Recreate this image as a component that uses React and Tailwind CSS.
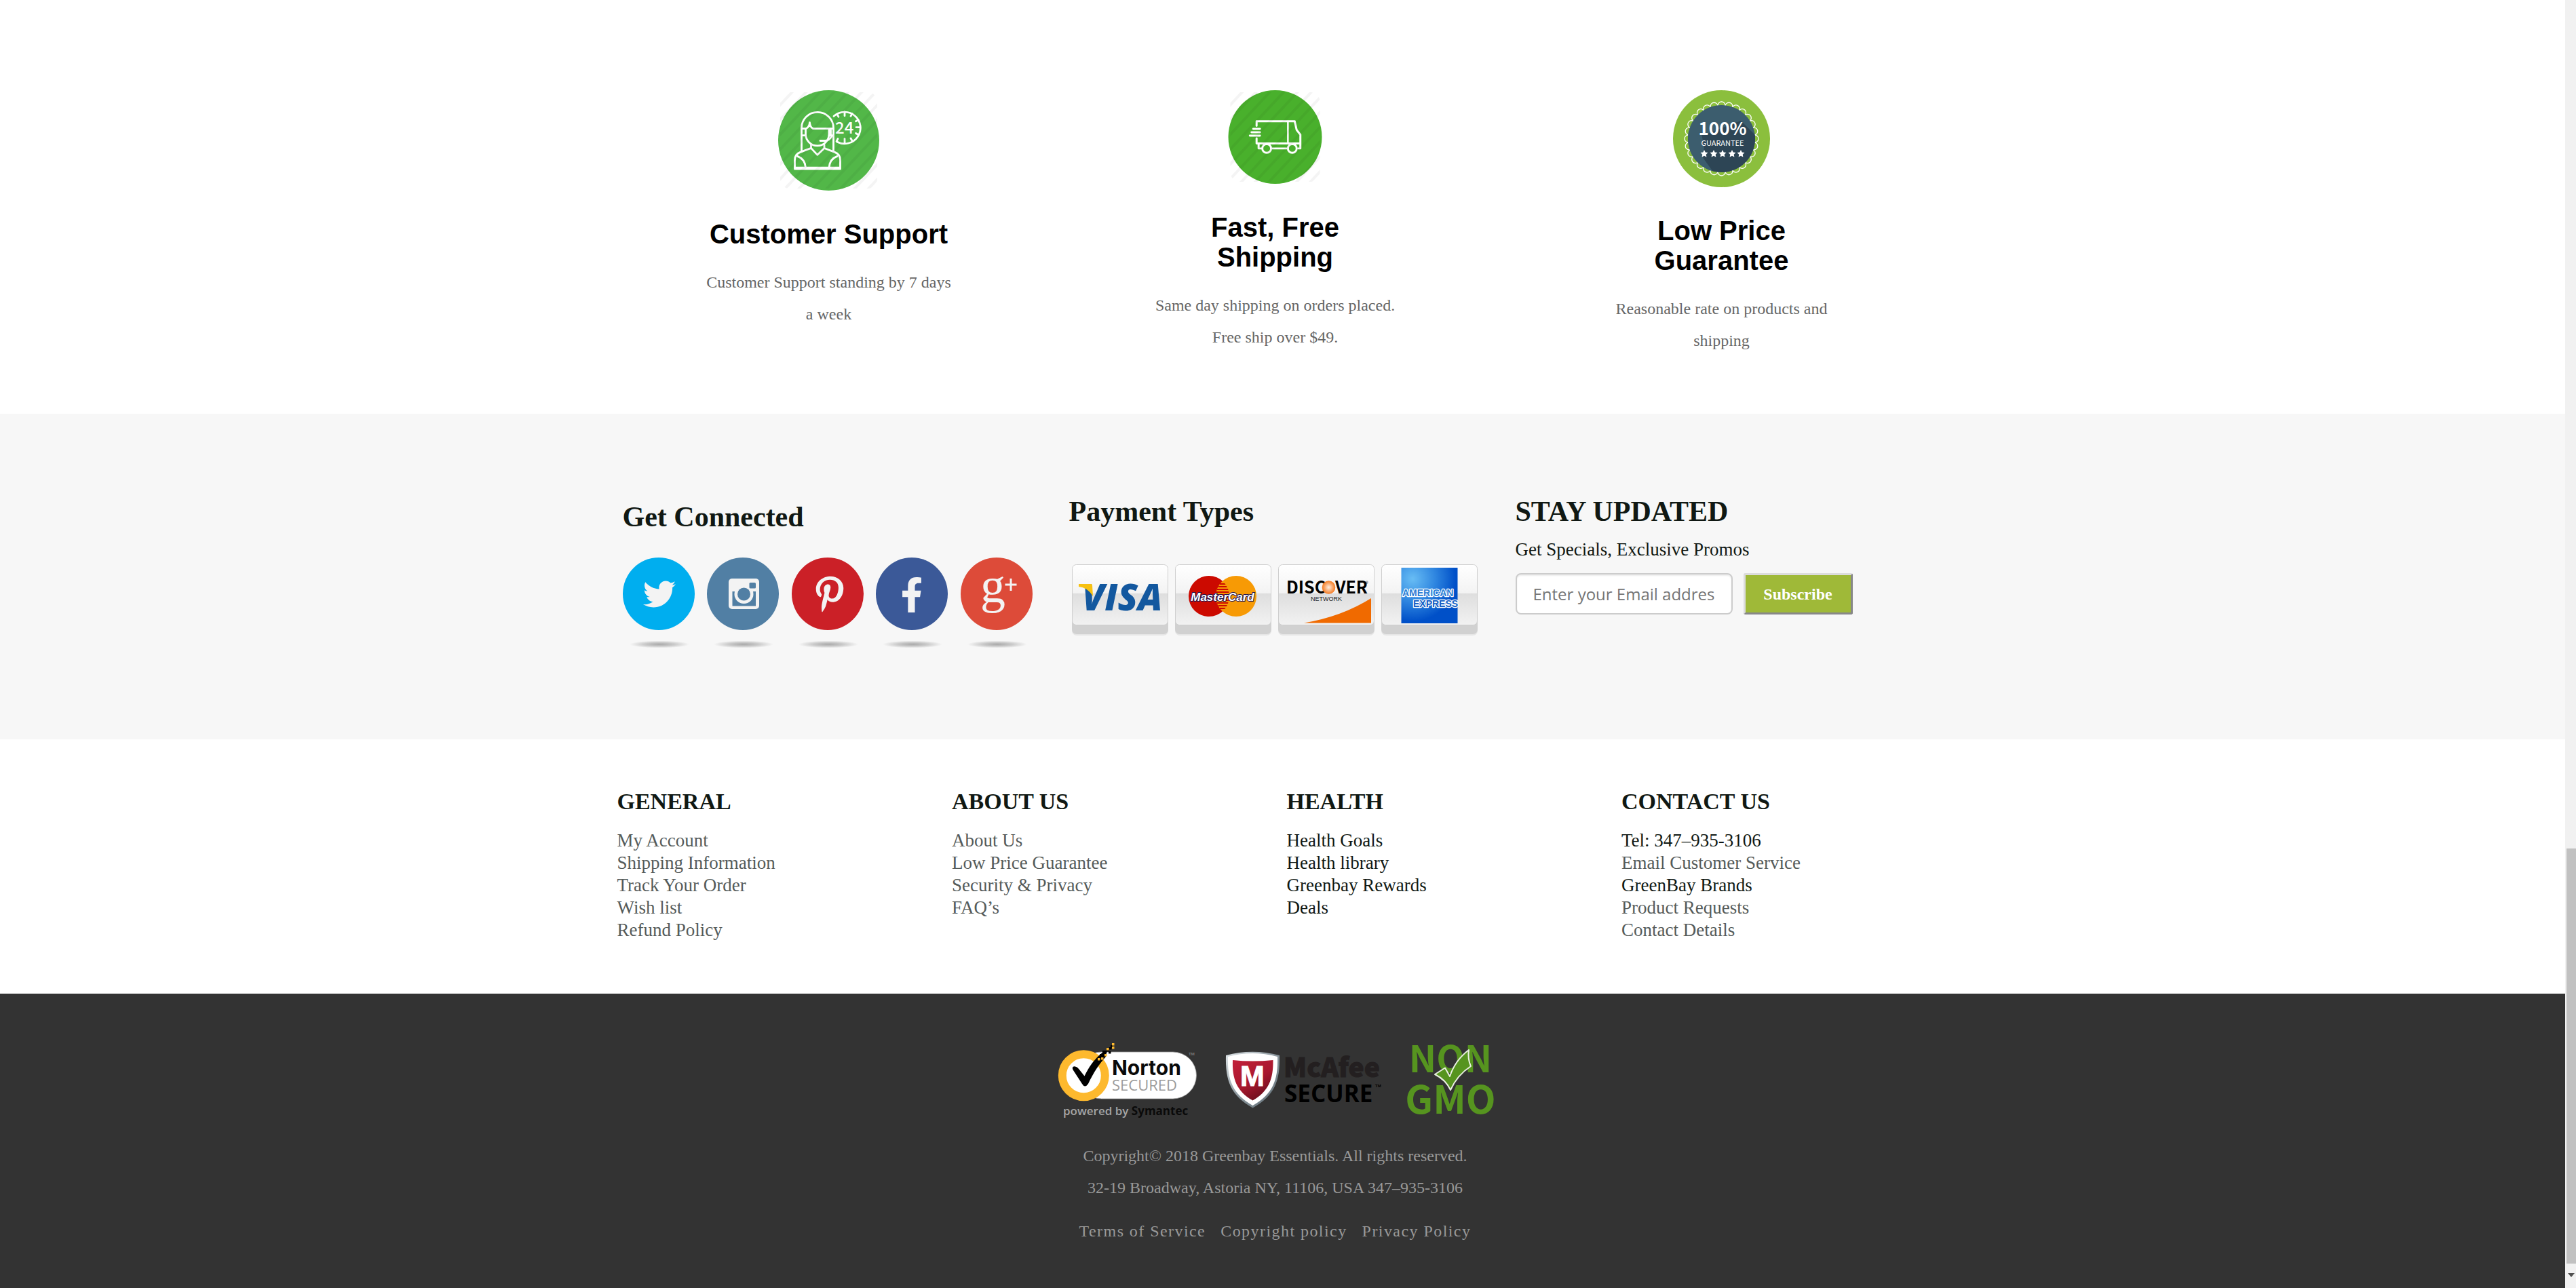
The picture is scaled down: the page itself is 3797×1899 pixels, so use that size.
import React from "react";
import { FaTwitter, FaPinterestP, FaFacebookF } from "react-icons/fa";

const SANS = '"Liberation Sans", Arial, sans-serif';
const SLIM = '"Noto Sans CJK SC", "Liberation Sans", sans-serif';
const OPEN = '"Open Sans", "Noto Sans", sans-serif';
const SERIF = '"Liberation Serif", "Times New Roman", serif';

function Stripes({ id, size }) {
  return (
    <>
      <defs>
        <pattern id={id} width="15" height="15" patternUnits="userSpaceOnUse" patternTransform="rotate(43)">
          <rect width="4" height="15" fill="#000" />
        </pattern>
      </defs>
      <rect x="3" y="3" width={size - 6} height={size - 6} rx="14" fill={`url(#${id})`} opacity="0.045" />
    </>
  );
}

function SupportIcon() {
  return (
    <svg width="149" height="148" viewBox="0 0 149 149" preserveAspectRatio="none" aria-hidden="true">
      <circle cx="74.500" cy="74.500" r="74.500" fill="#52b748" />
      <g fill="none" stroke="#fff" strokeWidth="2.800" strokeLinejoin="round" strokeLinecap="round">
        <path d="M34.500 91V56a23.500 23.500 0 0 1 47 0V91" />
        <path d="M34.500 57h6.500q5-2 5.500-9q.5 7 5 9H81" />
        <path d="M40.500 58v7c0 10 8 17.500 17.300 17.500S75 75 75 65v-7" />
        <path d="M36 67h4.500M75 67h4.500M77.500 59v7" />
        <path d="M79 68q-3 7-10 7h-7" />
        <path d="M48.500 81v5L57.800 96 68 86v-5" />
        <path d="M48.500 86l-16 6q-8 3-8 12v13h67v-13q0-9-8-12l-15.500-6" />
        <path d="M25 115h66M28.500 98q11 4 12 17M87 98q-11 4-12 17" />
        <path d="M82 38.500a23.500 23.500 0 1 1 4.500 38" />
        <path d="M98 32v6M98 72v6M121 55h-6M109 35l-2 3.500M118 44l-3.500 2M118 66l-3.500-2M109 75l-2-3.500M87 36l2 3.500M86 76l2-4" />
      </g>
      <text x="84" y="64" fontFamily={SLIM} fontSize="24" fontWeight="500" fill="#fff">24</text>
      <Stripes id="stripes-support" size={149} />
    </svg>
  );
}

function TruckIcon() {
  return (
    <svg width="139" height="138" viewBox="0 0 139 139" aria-hidden="true">
      <circle cx="69.500" cy="69.500" r="69.500" fill="#49b02c" />
      <g fill="none" stroke="#fff" strokeWidth="3" strokeLinejoin="round" strokeLinecap="round">
        <path d="M42 53v-7h56.500l3 13 5.500 7v20.500h-3M42 71.500V79h65M45 80v6.500h4M65 86.500h22" />
        <path d="M88.500 47v31" strokeWidth="2.500" />
        <circle cx="57" cy="86.500" r="6.500" />
        <circle cx="95" cy="86.500" r="6.500" />
        <path d="M37 57.500h10M34.500 62.500H47M32 67.500h15" />
      </g>
      <Stripes id="stripes-truck" size={139} />
    </svg>
  );
}

const STAR = "M0-5.500 1.700-2 5.500-1.500 2.700 1.200 3.400 5 0 3.200-3.400 5-2.700 1.200-5.500-1.500-1.700-2Z";

function GuaranteeIcon() {
  const scallops = Array.from({ length: 28 }, (_, i) => {
    const a = (i / 28) * Math.PI * 2 - Math.PI / 2;
    return [71.5 + 49 * Math.cos(a), 71.5 + 49 * Math.sin(a)];
  });
  return (
    <svg width="143" height="143" viewBox="0 0 143 143" aria-hidden="true">
      <defs>
        <clipPath id="seal"><circle cx="71.500" cy="71.500" r="49.500" /></clipPath>
      </defs>
      <circle cx="71.500" cy="71.500" r="71.500" fill="#8bbf3d" />
      {scallops.map(([x, y], i) => (
        <circle key={i} cx={x} cy={y} r="5.500" fill="#8bbf3d" stroke="#fff" strokeWidth="1.300" />
      ))}
      <circle cx="71.500" cy="71.500" r="49.500" fill="#3c5d6e" />
      <path clipPath="url(#seal)" d="M100 45 130 75V130H66L41 95V66L46 66Z" fill="#2d4555" />
      <path clipPath="url(#seal)" d="M20 60 41 60 46 84 44 100 62 127 20 127Z" fill="#3c5d6e" />
      <g fill="#fff" textAnchor="middle">
        <text x="73" y="66" fontFamily={SLIM} fontSize="26" fontWeight="700">100%</text>
        <text x="73" y="82" fontFamily={SLIM} fontSize="11">GUARANTEE</text>
        {[46, 60, 73, 87, 100].map((x) => (
          <path key={x} d={STAR} transform={`translate(${x} 93.500)`} />
        ))}
      </g>
    </svg>
  );
}

function SocialLink({ label, color, children }) {
  const id = `shade-${label.replace(/\W/g, "")}`;
  return (
    <a href="#" aria-label={label}>
      <svg width="106" height="136" viewBox="0 0 106 136" className="block" aria-hidden="true">
        <defs>
          <radialGradient id={id}>
            <stop offset="0" stopColor="#a8a8a8" />
            <stop offset="0.500" stopColor="#cacaca" />
            <stop offset="1" stopColor="#f7f7f7" />
          </radialGradient>
        </defs>
        <ellipse cx="53" cy="53.500" rx="53" ry="53.500" fill={color} />
        <g fill="#f3f3f3" color="#f3f3f3">{children}</g>
        <ellipse cx="54" cy="128" rx="44" ry="5.500" fill={`url(#${id})`} />
      </svg>
    </a>
  );
}

function Card({ label, children }) {
  const id = `card-${label}`;
  return (
    <svg width="142" height="106" viewBox="0 0 142 106" role="img" aria-label={label}>
      <defs>
        <linearGradient id={id} x1="0" y1="0" x2="0" y2="1">
          <stop offset="0" stopColor="#ffffff" />
          <stop offset="0.470" stopColor="#f3f3f3" />
          <stop offset="0.480" stopColor="#dedede" />
          <stop offset="1" stopColor="#f2f2f2" />
        </linearGradient>
      </defs>
      <rect x="0" y="12" width="142" height="93" rx="7" fill="#e6e6e6" />
      <rect x="0" y="10" width="142" height="93" rx="7" fill="#d1d1d1" />
      <rect x="0.500" y="0.500" width="141" height="89" rx="6" fill={`url(#${id})`} stroke="#cfcfcf" />
      {children}
    </svg>
  );
}

function Visa() {
  return (
    <Card label="Visa">
      <text x="15" y="68" fontFamily={OPEN} fontSize="54" fontWeight="800" fontStyle="italic" fill="#13589f">VISA</text>
      <path d="M10 29h18q2 0 2 2l1 16Q23 34 10 33Z" fill="#f7c111" />
    </Card>
  );
}

function MasterCard() {
  return (
    <Card label="MasterCard">
      <defs>
        <clipPath id="lens"><circle cx="50" cy="47" r="30" /></clipPath>
      </defs>
      <circle cx="50" cy="47" r="30" fill="#cc0a00" />
      <circle cx="90" cy="47" r="30" fill="#f79a05" />
      <g clipPath="url(#lens)" stroke="#cc0a00" strokeWidth="2">
        <path d="M66 29h14M64 33h16M62 37h18M60 41h20M60 45h20M60 49h20M61 53h19M62 57h18M64 61h16M66 65h14" />
      </g>
      <g fontFamily={SANS} fontSize="17" fontWeight="700" fontStyle="italic" textAnchor="middle">
        <text x="70" y="54" fill="#fff" stroke="#24174f" strokeWidth="2" paintOrder="stroke">MasterCard</text>
      </g>
    </Card>
  );
}

function Discover() {
  return (
    <Card label="Discover">
      <defs>
        <radialGradient id="disc-o">
          <stop offset="0" stopColor="#fdeee2" />
          <stop offset="1" stopColor="#f47a20" />
        </radialGradient>
      </defs>
      <g fontFamily={SLIM} fontWeight="700" fill="#000">
        <text x="12" y="43" fontSize="25">DISC</text>
        <text x="84" y="43" fontSize="25">VER</text>
      </g>
      <text x="129" y="29" fontFamily={SANS} fontSize="5">®</text>
      <text x="71" y="54" fontFamily={SANS} fontSize="9" textAnchor="middle" fill="#222">NETWORK</text>
      <circle cx="74.500" cy="34" r="9.800" fill="url(#disc-o)" />
      <path d="M38 86.500Q94 77 137 50v36.500Z" fill="#f06a00" />
    </Card>
  );
}

function Amex() {
  return (
    <Card label="Amex">
      <defs>
        <radialGradient id="amex-bg" cx="0.200" cy="0.200" r="0.900">
          <stop offset="0" stopColor="#68bdf4" />
          <stop offset="0.450" stopColor="#2f86e0" />
          <stop offset="0.850" stopColor="#0050c8" />
        </radialGradient>
      </defs>
      <rect x="29.500" y="5" width="83" height="82" fill="url(#amex-bg)" />
      <g fontFamily={SANS} fontSize="14" fontWeight="700" stroke="#fff" strokeWidth="2.400" paintOrder="stroke" strokeLinejoin="round">
        <text x="31" y="47" fill="#2b80d6">AMERICAN</text>
        <text x="47" y="63" fill="#105cc4">EXPRESS</text>
      </g>
    </Card>
  );
}

function NortonBadge() {
  const bits = [
    [64, 22, "#fdb92e"], [69, 17, "#fdb92e"], [72, 10, "#000"], [75, 13, "#000"], [69, 12, "#000"],
    [76, 7, "#000"], [72, 8, "#fdb92e"], [78, 4, "#000"], [80, 1, "#fdb92e"], [80, 6, "#fdb92e"],
    [62, 17, "#000"], [66, 12, "#000"], [59, 23, "#fdb92e"],
  ];
  return (
    <svg width="206" height="113" viewBox="0 0 206 113" role="img" aria-label="Norton Secured, powered by Symantec">
      <rect x="30" y="14" width="174.500" height="69" rx="34.500" fill="#fff" stroke="#9a9a9a" strokeWidth="0.800" />
      <circle cx="38.300" cy="48.700" r="31.500" fill="#fff" stroke="#fdb92e" strokeWidth="12" />
      <path d="M22.500 36c3-2 7 1 9 3.500l8 10C46 36 53 27 60 20l7-6 5 1-1 6C61 32 53 44 45 61q-5 7-9 0L23 41q-2-3-.5-5Z" fill="#000" />
      {bits.map(([x, y, c], i) => (
        <rect key={i} x={x} y={y} width="3.500" height="3.500" fill={c} />
      ))}
      <text x="80" y="48" fontFamily='"Inter", sans-serif' fontSize="30" fontWeight="700" fill="#0a0a0a">Norton</text>
      <text x="80" y="71" fontFamily={OPEN} fontSize="22" fill="#9b9b9b">SECURED</text>
      <text x="193" y="19" fontFamily={SANS} fontSize="6" fill="#999">TM</text>
      <text x="8" y="107" fontFamily={OPEN} fontSize="17" fontWeight="600" fill="#a5a5a5">
        powered by <tspan fill="#0a0a0a" fontWeight="700">Symantec</tspan>
      </text>
    </svg>
  );
}

function McAfeeBadge() {
  return (
    <svg width="232" height="113" viewBox="0 0 232 113" role="img" aria-label="McAfee Secure">
      <defs>
        <linearGradient id="mc-edge" x1="0" y1="0" x2="1" y2="1">
          <stop offset="0" stopColor="#dfe5e8" />
          <stop offset="0.500" stopColor="#8b979e" />
          <stop offset="1" stopColor="#5d6a72" />
        </linearGradient>
        <linearGradient id="mc-red" x1="0" y1="0" x2="0.600" y2="1">
          <stop offset="0" stopColor="#c3203a" />
          <stop offset="0.600" stopColor="#a8182e" />
          <stop offset="1" stopColor="#6d0f1e" />
        </linearGradient>
      </defs>
      <path d="M1 19Q40 8.500 80 19C81 57 73 78 40.500 96.500 8 78 0 57 1 19Z" fill="url(#mc-edge)" />
      <path d="M4 21Q40 11 77 21C78 56 70 76 40.500 93 11 76 3 56 4 21Z" fill="#fff" />
      <path d="M11 26Q40 29 70.500 26C71 54 64 72 40.500 85.500 17 72 10 54 11 26Z" fill="url(#mc-red)" />
      <text x="40" y="64" fontFamily={SANS} fontSize="43" fontWeight="700" textAnchor="middle" fill="#fff" stroke="#fff">M</text>
      <text x="86" y="51" fontFamily={SLIM} fontSize="39" fontWeight="900" fill="#231f20" stroke="#231f20">McAfee</text>
      <text x="87" y="88" fontFamily={OPEN} fontSize="35" fontWeight="700" fill="#000">SECURE</text>
      <text x="221" y="66" fontFamily={SANS} fontSize="6" fontWeight="700" fill="#000">TM</text>
    </svg>
  );
}

function NonGmoBadge() {
  return (
    <svg width="124" height="113" viewBox="0 0 124 113" className="overflow-visible" role="img" aria-label="Non GMO">
      <g fontFamily={SLIM} fontWeight="700" textAnchor="middle" fill="#56941f">
        <text x="61" y="44" fontSize="54">NON</text>
        <text x="61" y="105" fontSize="57">GMO</text>
      </g>
      <path d="M38 47 53 37.500 60 50Q68 26 88 11 86 24 91 35 71 48 61 70 54 55 38 47Z" fill="#56941f" stroke="#e8f0df" strokeWidth="2" strokeLinejoin="round" />
    </svg>
  );
}

const features = [
  { icon: SupportIcon, title: "Customer Support", text: "Customer Support standing by 7 days a week" },
  { icon: TruckIcon, title: "Fast, Free Shipping", text: "Same day shipping on orders placed. Free ship over $49." },
  { icon: GuaranteeIcon, title: "Low Price Guarantee", text: "Reasonable rate on products and shipping" },
];

const MUTED = "text-[#555b5a]";
const DARK = "text-[#101813]";

const columns = [
  {
    title: "GENERAL",
    items: [["My Account", MUTED], ["Shipping Information", MUTED], ["Track Your Order", MUTED], ["Wish list", MUTED], ["Refund Policy", MUTED]],
  },
  {
    title: "ABOUT US",
    items: [["About Us", MUTED], ["Low Price Guarantee", MUTED], ["Security & Privacy", MUTED], ["FAQ’s", MUTED]],
  },
  {
    title: "HEALTH",
    items: [["Health Goals", DARK], ["Health library", DARK], ["Greenbay Rewards", DARK], ["Deals", DARK]],
  },
  {
    title: "CONTACT US",
    items: [["Tel: 347–935-3106", DARK], ["Email Customer Service", MUTED], ["GreenBay Brands", DARK], ["Product Requests", MUTED], ["Contact Details", MUTED]],
  },
];

function Features() {
  return (
    <section className="bg-white pt-[133px] pb-[84px]">
      <div className="mx-auto grid w-full max-w-[1974px] grid-cols-3">
        {features.map(({ icon: Icon, title, text }) => (
          <div key={title} className="pr-[22px]">
            <div className="mx-auto flex max-w-[366px] flex-col items-center text-center">
              <Icon />
              <h2 className="mt-[42px] font-['Liberation_Sans',Arial,sans-serif] text-[40px] leading-11 font-bold text-black">
                {title}
              </h2>
              <p className="mt-[26px] text-2xl/[47px] text-[#666]">{text}</p>
            </div>
          </div>
        ))}
      </div>
    </section>
  );
}

function Connect() {
  return (
    <section className="bg-[#f7f7f7] pt-[120px] pb-[132px]">
      <div className="mx-auto grid w-full max-w-[1974px] grid-cols-3 text-[#101813]">
        <div className="pt-2 pl-[14px]">
          <h2 className="text-[42px] leading-12 font-bold">Get Connected</h2>
          <div className="mt-9 flex max-w-[604px] justify-between">
            <SocialLink label="Twitter" color="#00aeef">
              <FaTwitter x="30" y="30" size={48} />
            </SocialLink>
            <SocialLink label="Instagram" color="#517fa4">
              <rect x="32" y="31" width="45" height="45" rx="5" />
              <rect x="37.500" y="50" width="34.500" height="21.500" fill="#517fa4" />
              <circle cx="54.500" cy="54" r="14" />
              <circle cx="54.500" cy="54" r="9.500" fill="#517fa4" />
              <rect x="62.500" y="37" width="9.500" height="8.500" rx="1.500" fill="#517fa4" />
            </SocialLink>
            <SocialLink label="Pinterest" color="#cb2027">
              <FaPinterestP x="29" y="27" size={54} />
            </SocialLink>
            <SocialLink label="Facebook" color="#3b5998">
              <FaFacebookF x="27" y="29" size={52} />
            </SocialLink>
            <SocialLink label="Google+" color="#dd4b39">
              <text x="29" y="66" fontFamily={SERIF} fontSize="74">g</text>
              <path d="M65.500 38.500h17v3h-17zM72.500 31h3v18h-3z" />
            </SocialLink>
          </div>
        </div>
        <div className="pl-[14px]">
          <h2 className="text-[42px] leading-12 font-bold">Payment Types</h2>
          <div className="mt-[54px] flex gap-[10px] pl-1">
            <Visa />
            <MasterCard />
            <Discover />
            <Amex />
          </div>
        </div>
        <div className="pl-[14px]">
          <h2 className="text-[42px] leading-12 font-bold">STAY UPDATED</h2>
          <form className="mt-4" onSubmit={(e) => e.preventDefault()}>
            <label htmlFor="email" className="block text-[27px] leading-[33px]">
              Get Specials, Exclusive Promos
            </label>
            <div className="mt-[18px] flex gap-4">
              <input
                id="email"
                type="email"
                placeholder="Enter your Email address"
                className="h-[61px] w-[320px] rounded-lg border-2 border-[#ccc] bg-white px-6 font-['Open_Sans','Noto_Sans',sans-serif] text-2xl shadow-[inset_0_2px_2px_rgba(0,0,0,0.075)] placeholder:text-[#757575]"
              />
              <button
                type="submit"
                className="h-[61px] w-[161px] rounded-[3px] border-3 border-t-[#dcdcdc] border-r-[#888] border-b-[#888] border-l-[#dcdcdc] bg-[#9fb938] text-2xl font-bold text-white"
              >
                Subscribe
              </button>
            </div>
          </form>
        </div>
      </div>
    </section>
  );
}

function FooterLinks() {
  return (
    <nav className="bg-white pt-[72px] pb-[77px]">
      <div className="mx-auto grid w-full max-w-[1974px] grid-cols-4">
        {columns.map(({ title, items }) => (
          <div key={title} className="pl-[6px]">
            <h3 className="text-[34px] leading-10 font-bold text-[#101813]">{title}</h3>
            <ul className="mt-[21px] text-[27px] leading-[33px]">
              {items.map(([label, tone]) => (
                <li key={label}>
                  <a href="#" className={tone}>{label}</a>
                </li>
              ))}
            </ul>
          </div>
        ))}
      </div>
    </nav>
  );
}

function BottomBar() {
  return (
    <footer className="flex grow flex-col items-center bg-[#333] pt-[72px] pr-[22px] pb-[60px] text-center text-2xl/[47px] text-[#999]">
      <div className="flex">
        <NortonBadge />
        <div className="ml-[41px]"><McAfeeBadge /></div>
        <div className="ml-[39px]"><NonGmoBadge /></div>
      </div>
      <p className="mt-[31px]">Copyright© 2018 Greenbay Essentials. All rights reserved.</p>
      <p>32-19 Broadway, Astoria NY, 11106, USA 347–935-3106</p>
      <div className="mt-[17px] flex gap-[22px] tracking-[0.06em]">
        <a href="#">Terms of Service</a>
        <a href="#">Copyright policy</a>
        <a href="#">Privacy Policy</a>
      </div>
    </footer>
  );
}

function ScrollTrack() {
  return (
    <div className="flex w-4 shrink-0 flex-col items-end bg-[#f1f1f1]" aria-hidden="true">
      <div className="grow-[1251]" />
      <div className="w-[14px] grow-[612] bg-[#c1c1c1]" />
      <svg width="14" height="36" viewBox="0 0 14 36">
        <path d="M2 14h10l-5 6Z" fill="#505050" />
      </svg>
    </div>
  );
}

export default function App() {
  return (
    <div className="flex min-h-screen font-['Liberation_Serif','Times_New_Roman',serif]">
      <main className="flex grow flex-col">
        <Features />
        <Connect />
        <FooterLinks />
        <BottomBar />
      </main>
      <ScrollTrack />
    </div>
  );
}
